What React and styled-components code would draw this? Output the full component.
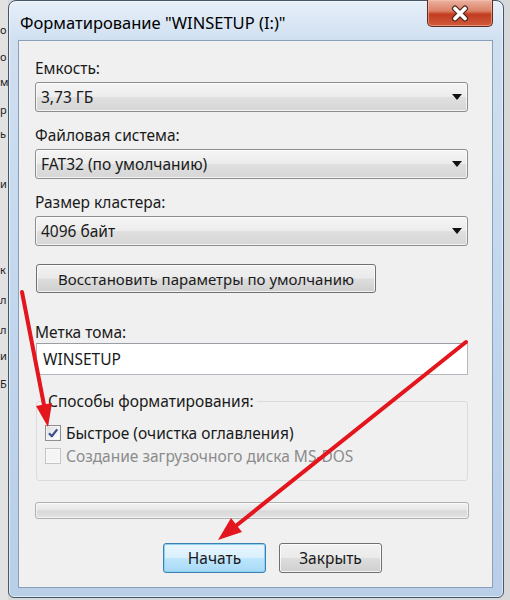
import styled, { createGlobalStyle } from "styled-components";

const GlobalStyle = createGlobalStyle`
    html, body {
        margin: 0;
        padding: 0;
    }
    body {
        font-family: "Noto Sans", "Open Sans", sans-serif;
    }
`;

const fragments = [
    { ch: "о", mt: 22 },
    { ch: "о", mt: 11 },
    { ch: "м", mt: 9 },
    { ch: "р", mt: 12 },
    { ch: "ь", mt: 8 },
    { ch: "и", mt: 34 },
    { ch: "к", mt: 70 },
    { ch: "л", mt: 14 },
    { ch: "л", mt: 14 },
    { ch: "и", mt: 10 },
    { ch: "Б", mt: 12 },
];

function Combo({ value }) {
    return (
        <ComboBox>
            <span>{value}</span>
            <DropArrow />
        </ComboBox>
    );
}

function Check({ checked, disabled, children }) {
    return (
        <CheckRow $disabled={disabled}>
            <CheckBox $disabled={disabled}>
                {checked && (
                    <svg width="12" height="12" viewBox="0 0 12 12">
                        <path d="M2 6.2 L4.8 9.2 L10.2 2.4" fill="none" stroke="#3b4f8c" strokeWidth="2.2" strokeLinejoin="round" />
                    </svg>
                )}
            </CheckBox>
            {children}
        </CheckRow>
    );
}

export default function App() {
    return (
        <Page>
            <GlobalStyle />
            <Behind>
                {fragments.map((f, i) => (
                    <Fragment key={i} $mt={f.mt}>{f.ch}</Fragment>
                ))}
            </Behind>

            <Window>
                <TitleBar>
                    <Title>{'Форматирование "WINSETUP (I:)"'}</Title>
                    <CloseButton>
                        <svg width="20" height="17" viewBox="0 0 20 17">
                            <path d="M5 3.5 L15 13.5 M15 3.5 L5 13.5" stroke="#4a2018" strokeWidth="6" strokeLinecap="round" />
                            <path d="M5 3.5 L15 13.5 M15 3.5 L5 13.5" stroke="#ffffff" strokeWidth="3.8" strokeLinecap="round" />
                        </svg>
                    </CloseButton>
                </TitleBar>

                <Client>
                    <Label>Емкость:</Label>
                    <Combo value="3,73 ГБ" />

                    <Label $mt={13}>Файловая система:</Label>
                    <Combo value="FAT32 (по умолчанию)" />

                    <Label $mt={13}>Размер кластера:</Label>
                    <Combo value="4096 байт" />

                    <PushButton $wide>Восстановить параметры по умолчанию</PushButton>

                    <Label $mt={29}>Метка тома:</Label>
                    <TextInput>WINSETUP</TextInput>

                    <GroupBox>
                        <Legend>Способы форматирования:</Legend>
                        <Check checked>Быстрое (очистка оглавления)</Check>
                        <Check disabled>Создание загрузочного диска MS-DOS</Check>
                    </GroupBox>

                    <Progress />

                    <ButtonRow>
                        <PushButton $primary>Начать</PushButton>
                        <PushButton>Закрыть</PushButton>
                    </ButtonRow>
                </Client>
            </Window>

            <Arrows viewBox="0 0 510 600">
                <line x1="22" y1="292" x2="44" y2="405" stroke="#e3161e" strokeWidth="4" strokeLinecap="round" />
                <polygon points="48,427 52,403 36,406" fill="#e3161e" />
                <line x1="466" y1="342" x2="237" y2="525" stroke="#e3161e" strokeWidth="4" strokeLinecap="round" />
                <polygon points="218,540 242,532 231,518" fill="#e3161e" />
            </Arrows>
        </Page>
    );
}

const Page = styled.div`
    position: relative;
    display: flex;
    width: 510px;
    height: 600px;
    overflow: hidden;
    background: #d6d8da;
`;

const Behind = styled.div`
    display: flex;
    flex-direction: column;
    width: 8px;
    flex-shrink: 0;
    overflow: hidden;
    background: #e2e2e2;
`;

const Fragment = styled.div`
    margin-top: ${(p) => p.$mt}px;
    font-size: 11px;
    line-height: 16px;
    color: #222;
    white-space: nowrap;
`;

const Window = styled.div`
    box-sizing: border-box;
    flex-shrink: 0;
    width: 496px;
    height: 598px;
    display: flex;
    flex-direction: column;
    padding: 0 10px 9px 9px;
    border: 1px solid #45566b;
    border-radius: 8px 8px 6px 6px;
    background: linear-gradient(180deg, #e6eff9 0%, #cfdff0 7%, #c0d5ec 60%, #b9cfe7 100%);
    box-shadow: inset 0 0 0 1px rgba(255, 255, 255, 0.55);
`;

const TitleBar = styled.div`
    height: 39px;
    display: flex;
    justify-content: space-between;
    align-items: flex-start;
`;

const Title = styled.div`
    margin-top: 11px;
    padding-left: 2px;
    font-size: 16.5px;
    line-height: 22px;
    color: #000;
`;

const CloseButton = styled.div`
    box-sizing: border-box;
    width: 66px;
    height: 27px;
    margin-top: -1px;
    display: flex;
    align-items: center;
    justify-content: center;
    border: 1px solid #5b2b22;
    border-top: none;
    border-radius: 0 0 5px 5px;
    background: linear-gradient(180deg, #eab3a3 0%, #dc8166 42%, #c23c20 55%, #d15a3b 100%);
    box-shadow: inset 0 0 0 1px rgba(255, 200, 180, 0.5);
`;

const Client = styled.div`
    flex: 1;
    display: flex;
    flex-direction: column;
    padding: 17px 23px 14px 16px;
    border: 1px solid #8aa0ba;
    background: #f0f0f0;
`;

const Label = styled.div`
    margin-top: ${(p) => p.$mt || 0}px;
    font-size: 15.5px;
    line-height: 20px;
    color: #1a1a1a;
`;

const ComboBox = styled.div`
    box-sizing: border-box;
    height: 30px;
    margin-top: 4px;
    margin-right: 1px;
    display: flex;
    align-items: center;
    justify-content: space-between;
    padding: 0 5px 0 5px;
    border: 1px solid #8d8d8d;
    border-radius: 3px;
    background: linear-gradient(180deg, #f5f5f5 0%, #ececec 48%, #dfdfdf 52%, #d6d6d6 100%);
    box-shadow: inset 0 0 0 1px rgba(255, 255, 255, 0.7);
    font-size: 15.5px;
    color: #1a1a1a;
`;

const DropArrow = styled.span`
    width: 0;
    height: 0;
    border-left: 5px solid transparent;
    border-right: 5px solid transparent;
    border-top: 6px solid #111;
`;

const PushButton = styled.div`
    box-sizing: border-box;
    width: ${(p) => (p.$wide ? "340px" : "103px")};
    height: ${(p) => (p.$wide ? "29px" : "30px")};
    margin-top: ${(p) => (p.$wide ? "18px" : "0")};
    margin-left: ${(p) => (p.$wide ? "1px" : "0")};
    display: flex;
    align-items: center;
    justify-content: center;
    border: 1px solid ${(p) => (p.$primary ? "#3c7fb1" : "#707070")};
    border-radius: 3px;
    background: ${(p) =>
        p.$primary
            ? "linear-gradient(180deg, #eaf6fd 0%, #d9f0fc 48%, #bee6fd 52%, #a7d9f5 100%)"
            : "linear-gradient(180deg, #f2f2f2 0%, #ebebeb 48%, #dddddd 52%, #cfcfcf 100%)"};
    box-shadow: inset 0 0 0 1px ${(p) => (p.$primary ? "#8fd1f3" : "rgba(255, 255, 255, 0.75)")};
    font-size: ${(p) => (p.$wide ? "15px" : "15.5px")};
    color: #1a1a1a;
`;

const TextInput = styled.div`
    box-sizing: border-box;
    height: 32px;
    margin: 1px 1px 0 1px;
    display: flex;
    align-items: center;
    padding-left: 6px;
    border: 1px solid #b5b8bf;
    border-top-color: #9a9da3;
    background: #fff;
    font-size: 15.5px;
    color: #1a1a1a;
`;

const GroupBox = styled.fieldset`
    box-sizing: border-box;
    height: 90px;
    margin: 16px 1px 0 1px;
    padding: 10px 8px 13px 8px;
    border: 1px solid #d9dcde;
    border-radius: 3px;
    min-width: 0;
`;

const Legend = styled.legend`
    padding: 0 3px;
    font-size: 15.5px;
    line-height: 20px;
    color: #1a1a1a;
`;

const CheckRow = styled.div`
    height: 23px;
    display: flex;
    align-items: center;
    gap: 5px;
    font-size: 15.5px;
    color: ${(p) => (p.$disabled ? "#8c8c8c" : "#1a1a1a")};
`;

const CheckBox = styled.div`
    box-sizing: border-box;
    width: 16px;
    height: 16px;
    display: flex;
    align-items: center;
    justify-content: center;
    border: 1px solid ${(p) => (p.$disabled ? "#c4c4c4" : "#8e8f8f")};
    background: ${(p) =>
        p.$disabled ? "#f4f4f4" : "linear-gradient(135deg, #dcdcdc 0%, #f4f4f4 60%, #ffffff 100%)"};
    box-shadow: inset 0 0 0 1px ${(p) => (p.$disabled ? "#fafafa" : "#f4f4f4")};
`;

const Progress = styled.div`
    box-sizing: border-box;
    height: 17px;
    margin-top: 21px;
    border: 1px solid #b0b0b0;
    border-radius: 3px;
    background: linear-gradient(180deg, #f3f3f3 0%, #e6e6e6 48%, #d9d9d9 52%, #e2e2e2 100%);
    box-shadow: inset 0 0 0 1px rgba(255, 255, 255, 0.6);
`;

const ButtonRow = styled.div`
    display: flex;
    gap: 13px;
    margin-top: 24px;
    padding-left: 128px;
`;

const Arrows = styled.svg`
    position: absolute;
    inset: 0;
    width: 510px;
    height: 600px;
    pointer-events: none;
`;
